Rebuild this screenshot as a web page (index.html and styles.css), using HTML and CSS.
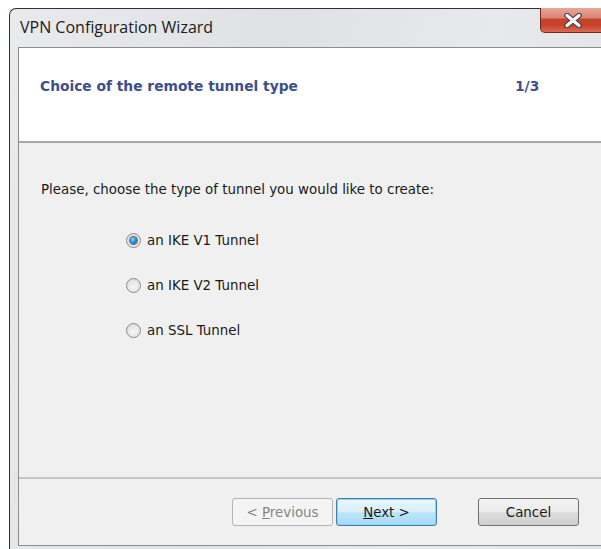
FILE: index.html
```html
<!DOCTYPE html>
<html lang="en">
<head>
<meta charset="utf-8">
<title>VPN Configuration Wizard</title>
<link rel="stylesheet" href="styles.css">
</head>
<body>
<div class="window">
  <div class="titlebar">
    <span class="title">VPN Configuration Wizard</span>
    <button class="close" aria-label="Close">
      <svg width="22" height="15" viewBox="0 0 22 15">
        <path d="M5 2.5 L17 12.5 M17 2.5 L5 12.5" stroke="#3c4250" stroke-width="5.5" stroke-linecap="round"/>
        <path d="M5 2.5 L17 12.5 M17 2.5 L5 12.5" stroke="#ffffff" stroke-width="3.2" stroke-linecap="round"/>
      </svg>
    </button>
  </div>
  <div class="client">
    <div class="header">
      <span class="step-title">Choice of the remote tunnel type</span>
      <span class="step-count">1/3</span>
    </div>
    <div class="content">
      <p class="prompt">Please, choose the type of tunnel you would like to create:</p>
      <div class="options">
        <label class="option"><span class="radio checked"></span>an IKE V1 Tunnel</label>
        <label class="option"><span class="radio"></span>an IKE V2 Tunnel</label>
        <label class="option"><span class="radio"></span>an SSL Tunnel</label>
      </div>
    </div>
    <div class="footer">
      <button class="btn disabled">&lt; <u>P</u>revious</button>
      <button class="btn default"><u>N</u>ext &gt;</button>
      <button class="btn cancel">Cancel</button>
    </div>
  </div>
</div>
</body>
</html>
```

FILE: styles.css
```css
html, body {
  margin: 0;
  padding: 0;
  background: #ffffff;
  width: 601px;
  height: 549px;
  overflow: hidden;
}

.window {
  margin: 8px 0 0 9px;
  width: 600px;
  height: 541px;
  box-sizing: border-box;
  border-left: 1px solid #2e3136;
  border-top: 1px solid #2e3136;
  border-top-left-radius: 7px;
  background: linear-gradient(100deg, #e9eaec 0%, #dfe1e4 40%, #e8e9eb 70%, #e2e3e5 100%);
  display: flex;
  flex-direction: column;
}

.titlebar {
  position: relative;
  height: 38px;
  display: flex;
  align-items: center;
  padding-left: 10px;
}

.title {
  font-family: "Open Sans", "Noto Sans", sans-serif;
  font-size: 16px;
  color: #1b1b1b;
  margin-top: -2px;
}

.close {
  position: absolute;
  top: -1px;
  left: 530px;
  width: 66px;
  height: 25px;
  border: 1px solid #6b2a22;
  border-top: none;
  border-radius: 0 0 5px 5px;
  background: linear-gradient(#e9a697 0%, #dc8472 40%, #c5432d 48%, #c8412a 70%, #dc6a52 100%);
  padding: 0;
  display: flex;
  align-items: center;
  justify-content: center;
}

.client {
  margin-left: 8px;
  flex: 1;
  margin-bottom: 3px;
  border: 1px solid #8c8c8c;
  border-right: none;
  background: #f0f0f0;
  display: flex;
  flex-direction: column;
}

.header {
  height: 95px;
  background: #ffffff;
  border-bottom: 2px solid #a8a8a8;
  box-sizing: border-box;
  display: flex;
  align-items: center;
  padding-bottom: 17px;
  font-family: "DejaVu Sans", sans-serif;
  font-weight: bold;
  font-size: 13.8px;
  color: #3d4f8a;
}

.step-title {
  margin-left: 21px;
  width: 475px;
}

.content {
  flex: 1;
  border-bottom: 2px solid #c6c6c6;
  font-family: "DejaVu Sans", sans-serif;
  font-size: 13.4px;
  color: #1a1a1a;
}

.prompt {
  margin: 39px 0 0 22px;
}

.options {
  margin: 34px 0 0 107px;
  display: flex;
  flex-direction: column;
  gap: 27px;
}

.option {
  display: flex;
  align-items: center;
  gap: 6px;
  height: 18px;
}

.radio {
  width: 13px;
  height: 13px;
  border: 1px solid #8a8b8c;
  border-radius: 50%;
  background: radial-gradient(circle at 50% 60%, #f6f6f6 0%, #e6e6e6 55%, #cfcfcf 100%);
  display: flex;
  align-items: center;
  justify-content: center;
}

.radio.checked::after {
  content: "";
  width: 7px;
  height: 7px;
  border-radius: 50%;
  background: radial-gradient(circle at 40% 35%, #8fdcfb 0%, #2a8fd3 45%, #0d4f8a 100%);
  box-shadow: 0 0 0 1px #5b6d7c;
}

.footer {
  height: 66px;
  display: flex;
  align-items: center;
  padding-left: 213px;
}

.btn {
  height: 28px;
  width: 101px;
  box-sizing: border-box;
  border: 1px solid #707070;
  border-radius: 3px;
  background: linear-gradient(#f3f3f3 0%, #ebebeb 48%, #dddddd 52%, #cfcfcf 100%);
  font-family: "DejaVu Sans", sans-serif;
  font-size: 13.4px;
  color: #1a1a1a;
  padding: 0;
}

.btn.disabled {
  border-color: #b3b5b7;
  background: #f4f4f4;
  color: #858585;
}

.btn.default {
  margin-left: 3px;
  border-color: #3c7fb1;
  background: linear-gradient(#eaf6fd 0%, #d9f0fc 48%, #bee6fd 52%, #a7d9f5 100%);
  box-shadow: inset 0 0 0 1px #8fd3f5;
}

.btn.cancel {
  margin-left: 41px;
}
```
